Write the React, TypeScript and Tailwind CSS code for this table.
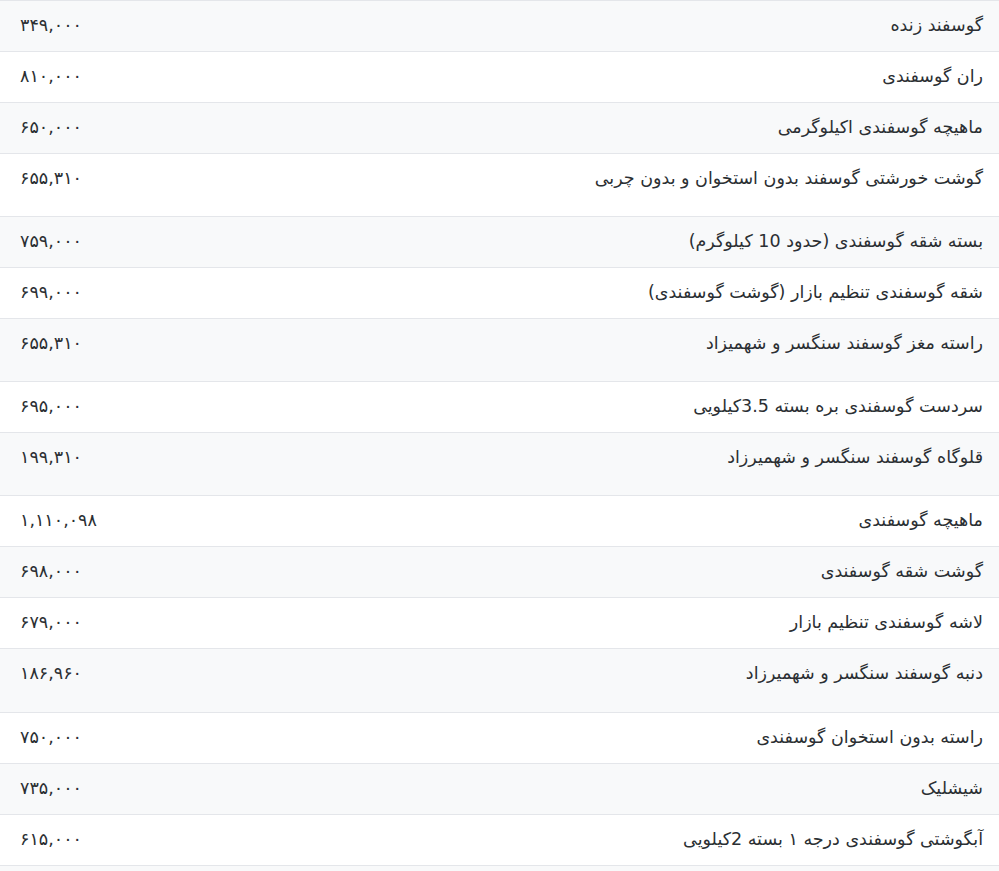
const rows: { name: string; price: string; extra?: number }[] = [
  { name: "گوسفند زنده", price: "۳۴۹,۰۰۰" },
  { name: "ران گوسفندی", price: "۸۱۰,۰۰۰" },
  { name: "ماهیچه گوسفندی اکیلوگرمی", price: "۶۵۰,۰۰۰" },
  { name: "گوشت خورشتی گوسفند بدون استخوان و بدون چربی", price: "۶۵۵,۳۱۰", extra: 1 },
  { name: "بسته شقه گوسفندی (حدود 10 کیلوگرم)", price: "۷۵۹,۰۰۰" },
  { name: "شقه گوسفندی تنظیم بازار (گوشت گوسفندی)", price: "۶۹۹,۰۰۰" },
  { name: "راسته مغز گوسفند سنگسر و شهمیزاد", price: "۶۵۵,۳۱۰", extra: 1 },
  { name: "سردست گوسفندی بره بسته 3.5کیلویی", price: "۶۹۵,۰۰۰" },
  { name: "قلوگاه گوسفند سنگسر و شهمیرزاد", price: "۱۹۹,۳۱۰", extra: 1 },
  { name: "ماهیچه گوسفندی", price: "۱,۱۱۰,۰۹۸" },
  { name: "گوشت شقه گوسفندی", price: "۶۹۸,۰۰۰" },
  { name: "لاشه گوسفندی تنظیم بازار", price: "۶۷۹,۰۰۰" },
  { name: "دنبه گوسفند سنگسر و شهمیرزاد", price: "۱۸۶,۹۶۰", extra: 2 },
  { name: "راسته بدون استخوان گوسفندی", price: "۷۵۰,۰۰۰" },
  { name: "شیشلیک", price: "۷۳۵,۰۰۰" },
  { name: "آبگوشتی گوسفندی درجه ۱ بسته 2کیلویی", price: "۶۱۵,۰۰۰" },
  { name: "", price: "" },
];

export default function App() {
  return (
    <div
      dir="rtl"
      className="w-[999px] bg-white text-[17.5px] leading-[25px] text-[#2b2f33]"
      style={{ fontFamily: '"DejaVu Sans", sans-serif' }}
    >
      {rows.map((row, i) => (
        <div
          key={i}
          className={`flex items-start justify-between border-t border-[#e4e6ea] ${
            i % 2 === 0 ? "bg-[#f8f9fa]" : "bg-white"
          }`}
        >
          <div
            className={`pr-4 pt-3 ${
              row.extra === 2 ? "pb-[26px]" : row.extra === 1 ? "pb-[25px]" : "pb-[13px]"
            }`}
          >
            {row.name}
          </div>
          <div className="pl-5 pt-3 pb-[13px]">{row.price}</div>
        </div>
      ))}
    </div>
  );
}
